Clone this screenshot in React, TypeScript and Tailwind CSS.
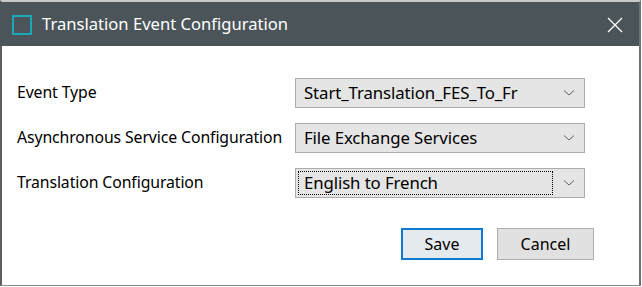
import React from 'react';

const rows = [
  { label: 'Event Type', value: 'Start_Translation_FES_To_Fr', focused: false },
  { label: 'Asynchronous Service Configuration', value: 'File Exchange Services', focused: false },
  { label: 'Translation Configuration', value: 'English to French', focused: true },
];

function Chevron() {
  return (
    <svg width="12" height="8" viewBox="0 0 12 8" className="text-[#606060]">
      <path d="M1 1.5 L6 6 L11 1.5" fill="none" stroke="currentColor" strokeWidth="1" />
    </svg>
  );
}

function App() {
  return (
    <div className="w-[642px] h-[287px] bg-white font-['Noto_Sans',sans-serif] text-[#000]">
      <div className="w-[641px] h-[286px] flex flex-col border-t-2 border-t-[#c6c8ca] border-l-2 border-l-[#5d6063] border-r-2 border-r-[#6e7275] border-b border-b-[#8c8c8c]">
        {/* Title bar */}
        <div className="h-[44px] bg-[#4b5459] flex items-center pl-[12px] pr-[16px] -ml-[2px]">
          <div className="w-[20px] h-[20px] border-2 border-[#1aa8b9] mr-[10px] mt-[1px]" />
          <span className="text-[16.6px] text-white">Translation Event Configuration</span>
          <div className="ml-auto mt-[2px]">
            <svg width="16" height="16" viewBox="0 0 16 16">
              <path d="M1 1 L15 15 M15 1 L1 15" stroke="#ffffff" strokeWidth="1.3" />
            </svg>
          </div>
        </div>

        {/* Form */}
        <div className="flex flex-col gap-[15px] pt-[32px] pl-[15px]">
          {rows.map((r) => (
            <div key={r.label} className="flex items-center h-[30px]">
              <span className="w-[278px] text-[15.8px] tracking-[-0.1px]">{r.label}</span>
              <div className="w-[290px] h-[30px] bg-[#e5e5e5] border border-[#acacac] flex items-center pl-[2px] pr-[9px]">
                <div
                  className={`flex-1 h-[24px] flex items-center pl-[5px] text-[16.8px] tracking-[-0.1px] mr-[10px] ${
                    r.focused ? 'border border-dotted border-[#000]' : 'border border-transparent'
                  }`}
                >
                  {r.value}
                </div>
                <Chevron />
              </div>
            </div>
          ))}
        </div>

        {/* Buttons */}
        <div className="flex justify-end gap-[14px] pr-[45px] mt-[30px]">
          <button className="w-[82px] h-[32px] bg-[#e5eaef] border-2 border-[#0d79d5] text-[16px]">Save</button>
          <button className="w-[97px] h-[32px] bg-[#e1e1e1] border border-[#adadad] text-[16px]">Cancel</button>
        </div>
      </div>
    </div>
  );
}

export default App;
